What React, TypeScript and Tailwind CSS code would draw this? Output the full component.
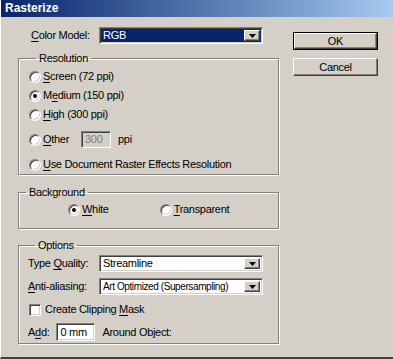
import type { ReactNode } from "react";

const sunken =
  "border border-t-[#808080] border-l-[#808080] border-b-white border-r-white shadow-[inset_1px_1px_0_#404040,inset_-1px_-1px_0_#d4d0c8]";
const raised =
  "border border-t-white border-l-white border-b-[#404040] border-r-[#404040] shadow-[inset_-1px_-1px_0_#808080,inset_1px_1px_0_#d4d0c8]";
const etched =
  "border border-[#808080] shadow-[inset_1px_1px_0_#fff,1px_1px_0_#fff]";

function Key({ children }: { children: ReactNode }) {
  return <span className="underline underline-offset-[2px]">{children}</span>;
}

function Arrow() {
  return (
    <div className={`flex h-full w-[16px] shrink-0 items-center justify-center bg-[#d4d0c8] ${raised}`}>
      <svg width="7" height="4" viewBox="0 0 7 4">
        <path d="M0 0h7L3.5 4z" fill="#000" />
      </svg>
    </div>
  );
}

function Select({ value, active, textClassName }: { value: string; active?: boolean; textClassName?: string }) {
  return (
    <div className={`flex h-[17px] w-[164px] items-center p-[2px] ${sunken} ${active ? "bg-[#0a246a]" : "bg-white"}`}>
      <span
        className={`flex-1 overflow-hidden whitespace-nowrap pl-[1px] leading-none ${active ? "text-white" : "text-black"} ${textClassName ?? ""}`}
      >
        {value}
      </span>
      <Arrow />
    </div>
  );
}

function Radio({ checked, children }: { checked?: boolean; children: ReactNode }) {
  return (
    <div className="flex items-center gap-[2px]">
      <div className="flex h-[12px] w-[12px] items-center justify-center rounded-full border border-t-[#808080] border-l-[#808080] border-b-white border-r-white bg-white shadow-[inset_1px_1px_0_#404040,inset_-1px_-1px_0_#d4d0c8]">
        {checked && <div className="h-[4px] w-[4px] rounded-full bg-black" />}
      </div>
      <span>{children}</span>
    </div>
  );
}

function Group({ title, className, children }: { title: string; className?: string; children: ReactNode }) {
  return (
    <fieldset className={`${etched} ${className ?? ""}`}>
      <legend className="ml-[7px] px-[3px] leading-[12px]">{title}</legend>
      {children}
    </fieldset>
  );
}

function Button({ children, isDefault }: { children: ReactNode; isDefault?: boolean }) {
  return (
    <div className={`h-[18px] w-[85px] ${isDefault ? "border border-black" : ""}`}>
      <div className={`flex h-full w-full items-center justify-center bg-[#d4d0c8] ${raised}`}>{children}</div>
    </div>
  );
}

export default function App() {
  return (
    <div
      className="relative h-[359px] w-[393px] overflow-hidden border-b-2 border-l border-b-[#404040] border-l-white bg-[#d4d0c8] text-[11px] leading-[13px] tracking-[-0.3px] text-black"
      style={{ fontFamily: '"Liberation Sans", Arial, sans-serif' }}
    >
      <div className="flex h-[17px] items-center bg-gradient-to-r from-[#0a246a] to-[#a6caf0] pl-[4px] text-[12px] font-bold tracking-normal text-white">
        Rasterize
      </div>

      <div className="flex pl-[17px] pt-[10px]">
        <div className="w-[261px]">
          <div className="flex items-center">
            <span className="w-[81px] pl-[13px]">
              <Key>C</Key>olor Model:
            </span>
            <Select value="RGB" active />
          </div>

          <Group title="Resolution" className="mt-[8px] h-[123px] pl-[10px]">
            <div className="flex flex-col pt-[3px]">
              <div className="flex h-[19px] items-center">
                <Radio>
                  <Key>S</Key>creen (72 ppi)
                </Radio>
              </div>
              <div className="flex h-[19px] items-center">
                <Radio checked>
                  M<Key>e</Key>dium (150 ppi)
                </Radio>
              </div>
              <div className="flex h-[19px] items-center">
                <Radio>
                  <Key>H</Key>igh (300 ppi)
                </Radio>
              </div>
              <div className="mt-[6px] flex h-[19px] items-center">
                <Radio>
                  <Key>O</Key>ther
                </Radio>
                <div className={`ml-[12px] flex h-[17px] w-[30px] items-center bg-[#d4d0c8] pl-[3px] text-[#808080] ${sunken}`}>
                  300
                </div>
                <span className="ml-[7px]">ppi</span>
              </div>
              <div className="mt-[6px] flex h-[19px] items-center">
                <Radio>
                  <Key>U</Key>se Document Raster Effects Resolution
                </Radio>
              </div>
            </div>
          </Group>

          <Group title="Background" className="mt-[11px] h-[43px]">
            <div className="flex items-center pt-[5px]">
              <div className="ml-[49px]">
                <Radio checked>
                  <Key>W</Key>hite
                </Radio>
              </div>
              <div className="ml-[51px]">
                <Radio>
                  <Key>T</Key>ransparent
                </Radio>
              </div>
            </div>
          </Group>

          <Group title="Options" className="mt-[10px] h-[105px] pl-[9px]">
            <div className="flex flex-col pt-[4px]">
              <div className="flex items-center">
                <span className="w-[71px]">
                  Type <Key>Q</Key>uality:
                </span>
                <Select value="Streamline" />
              </div>
              <div className="mt-[6px] flex items-center">
                <span className="w-[71px]">
                  <Key>A</Key>nti-aliasing:
                </span>
                <Select value="Art Optimized (Supersampling)" textClassName="text-[10px] tracking-[-0.4px]" />
              </div>
              <div className="mt-[8px] flex items-center gap-[4px] pl-[1px]">
                <div className={`h-[12px] w-[12px] bg-white ${sunken}`} />
                <span>
                  Create Clipping <Key>M</Key>ask
                </span>
              </div>
              <div className="mt-[7px] flex items-center">
                <span>
                  A<Key>d</Key>d:
                </span>
                <div className={`ml-[7px] flex h-[18px] w-[39px] items-center bg-white pl-[3px] ${sunken}`}>0 mm</div>
                <span className="ml-[7px]">Around Object:</span>
              </div>
            </div>
          </Group>
        </div>

        <div className="ml-[14px] flex flex-col gap-[8px] pt-[5px]">
          <Button isDefault>OK</Button>
          <Button>Cancel</Button>
        </div>
      </div>
    </div>
  );
}
